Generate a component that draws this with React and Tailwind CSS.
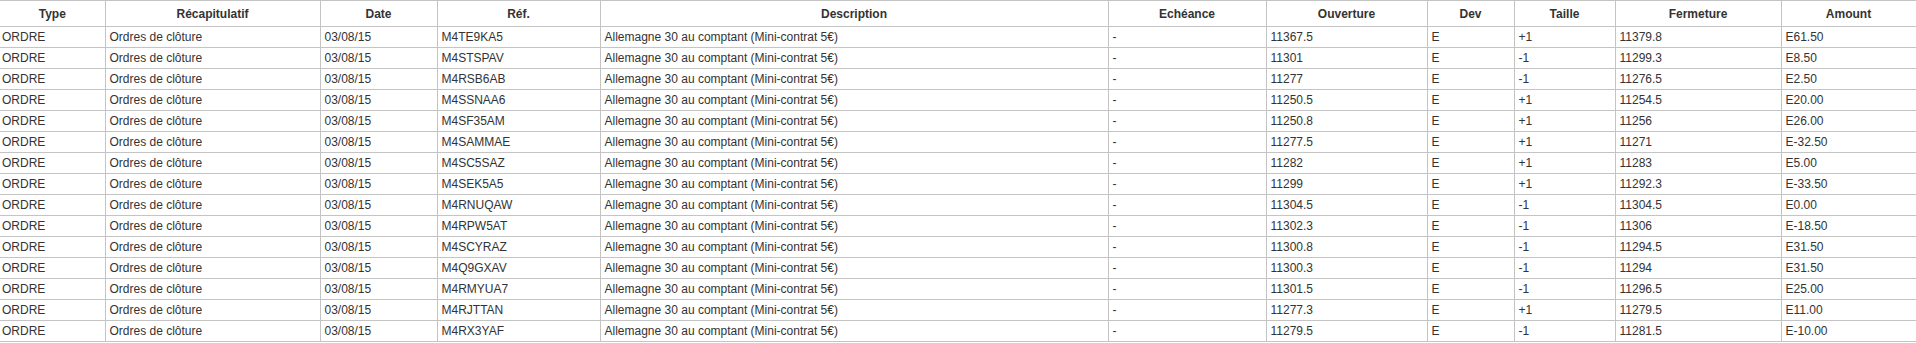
import React from 'react';

const rows = [
  ['M4TE9KA5', '11367.5', '+1', '11379.8', 'E61.50'],
  ['M4STSPAV', '11301', '-1', '11299.3', 'E8.50'],
  ['M4RSB6AB', '11277', '-1', '11276.5', 'E2.50'],
  ['M4SSNAA6', '11250.5', '+1', '11254.5', 'E20.00'],
  ['M4SF35AM', '11250.8', '+1', '11256', 'E26.00'],
  ['M4SAMMAE', '11277.5', '+1', '11271', 'E-32.50'],
  ['M4SC5SAZ', '11282', '+1', '11283', 'E5.00'],
  ['M4SEK5A5', '11299', '+1', '11292.3', 'E-33.50'],
  ['M4RNUQAW', '11304.5', '-1', '11304.5', 'E0.00'],
  ['M4RPW5AT', '11302.3', '-1', '11306', 'E-18.50'],
  ['M4SCYRAZ', '11300.8', '-1', '11294.5', 'E31.50'],
  ['M4Q9GXAV', '11300.3', '-1', '11294', 'E31.50'],
  ['M4RMYUA7', '11301.5', '-1', '11296.5', 'E25.00'],
  ['M4RJTTAN', '11277.3', '+1', '11279.5', 'E11.00'],
  ['M4RX3YAF', '11279.5', '-1', '11281.5', 'E-10.00'],
];

const headers = [
  'Type', 'Récapitulatif', 'Date', 'Réf.', 'Description', 'Echéance',
  'Ouverture', 'Dev', 'Taille', 'Fermeture', 'Amount',
];

const th = 'border border-[#c4c4c4] h-[26px] p-0 text-center font-bold';
const td = 'border border-[#c4c4c4] h-[21px] py-0 pl-[4px] text-left font-normal whitespace-nowrap';

const App = () => {
  return (
    <div className="bg-white w-[1916px] h-[343px] overflow-hidden font-['Liberation_Sans',Arial,sans-serif] text-[12px] text-[#333]">
      <table className="table-fixed w-[1916px] border-collapse border-l-0">
        <colgroup>
          <col className="w-[105px]" />
          <col className="w-[215px]" />
          <col className="w-[117px]" />
          <col className="w-[163px]" />
          <col className="w-[508px]" />
          <col className="w-[158px]" />
          <col className="w-[161px]" />
          <col className="w-[87px]" />
          <col className="w-[101px]" />
          <col className="w-[166px]" />
          <col className="w-[135px]" />
        </colgroup>
        <thead>
          <tr>
            {headers.map((h, i) => (
              <th key={h} className={`${th} ${i === 0 ? 'border-l-0' : ''}`}>{h}</th>
            ))}
          </tr>
        </thead>
        <tbody>
          {rows.map(([ref, open, size, close, amount]) => (
            <tr key={ref}>
              <td className={`${td} border-l-0 !pl-[2px]`}>ORDRE</td>
              <td className={td}>Ordres de clôture</td>
              <td className={td}>03/08/15</td>
              <td className={td}>{ref}</td>
              <td className={td}>Allemagne 30 au comptant (Mini-contrat 5€)</td>
              <td className={td}>-</td>
              <td className={td}>{open}</td>
              <td className={td}>E</td>
              <td className={td}>{size}</td>
              <td className={td}>{close}</td>
              <td className={td}>{amount}</td>
            </tr>
          ))}
        </tbody>
      </table>
    </div>
  );
};

export default App;
